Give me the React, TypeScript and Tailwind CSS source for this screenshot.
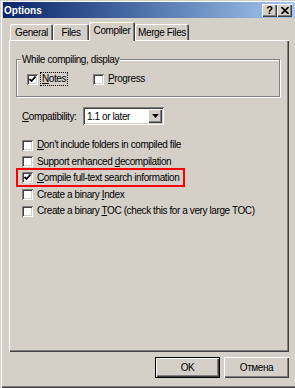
const raised =
  "shadow-[inset_1px_1px_#ffffff,inset_-1px_-1px_#404040,inset_-2px_-2px_#808080]";
const sunken =
  "shadow-[inset_1px_1px_#808080,inset_-1px_-1px_#ffffff,inset_2px_2px_#404040,inset_-2px_-2px_#d4d0c8]";

function CheckBox({ checked }: { checked?: boolean }) {
  return (
    <span
      className={`flex h-[11px] w-[11px] shrink-0 items-center justify-center bg-white ${sunken}`}
    >
      {checked && (
        <svg width="11" height="11" viewBox="0 0 11 11">
          <path d="M2.5 5l2 2 4-4.5" fill="none" stroke="#000" strokeWidth="1.8" />
        </svg>
      )}
    </span>
  );
}

function Label({
  text,
  u,
  focus,
}: {
  text: string;
  u: number;
  focus?: boolean;
}) {
  return (
    <span
      className={`ml-[2px] whitespace-nowrap border px-[1px] leading-[12px] ${
        focus ? "border-dotted border-black" : "border-transparent"
      }`}
    >
      {text.slice(0, u)}
      <span className="underline">{text[u]}</span>
      {text.slice(u + 1)}
    </span>
  );
}

function Tab({ label, selected, w }: { label: string; selected?: boolean; w: string }) {
  return (
    <div
      className={`flex items-center justify-center whitespace-nowrap rounded-t-[2px] bg-[#d4d0c8] shadow-[inset_1px_1px_#ffffff,inset_-1px_0_#404040,inset_-2px_0_#808080] ${w} ${
        selected ? "h-[19px] pb-[2px]" : "mb-px h-[16px]"
      }`}
    >
      {label}
    </div>
  );
}

const options = [
  { text: "Don't include folders in compiled file", u: 0 },
  { text: "Support enhanced decompilation", u: 17 },
  { text: "Compile full-text search information", u: 0, checked: true, mark: true },
  { text: "Create a binary Index", u: 16 },
  { text: "Create a binary TOC (check this for a very large TOC)", u: 16 },
];

export default function App() {
  return (
    <div className="flex h-[388px] w-[295px] flex-col overflow-hidden bg-[#d4d0c8] pl-[3px] pt-[2px] text-[10px] tracking-[-0.4px] text-black shadow-[inset_1px_1px_#d4d0c8,inset_2px_2px_#ffffff,inset_0_-1px_#404040,inset_0_-2px_#808080] [font-family:'Liberation_Sans',Arial,sans-serif]">
      {/* title bar */}
      <div className="flex h-[16px] items-center justify-between bg-linear-to-r from-[#0a246a] to-[#a6caf0] pl-[1px] pr-[3px]">
        <span className="text-[10px] font-bold tracking-normal text-white">Options</span>
        <div className="flex">
          <span
            className={`flex h-[13px] w-[15px] items-center justify-center bg-[#d4d0c8] text-[11px] font-bold leading-none ${raised}`}
          >
            ?
          </span>
          <span
            className={`flex h-[13px] w-[15px] items-center justify-center bg-[#d4d0c8] ${raised}`}
          >
            <svg width="8" height="7" viewBox="0 0 8 7">
              <path d="M0.5 0l7 7M7.5 0l-7 7" stroke="#000" strokeWidth="1.6" />
            </svg>
          </span>
        </div>
      </div>

      <div className="flex flex-col pl-[6px] pt-[4px]">
        {/* tabs */}
        <div className="relative z-10 -mb-px ml-[1px] flex items-end">
          <Tab label="General" w="w-[43px]" />
          <Tab label="Files" w="w-[36px]" />
          <Tab label="Compiler" w="w-[46px]" selected />
          <Tab label="Merge Files" w="w-[54px]" />
        </div>

        {/* panel */}
        <div className={`flex h-[312px] w-[280px] flex-col px-[7px] pt-[13px] ${raised}`}>
          <fieldset className="w-[264px] border border-[#808080] shadow-[1px_1px_0_#ffffff,inset_1px_1px_0_#ffffff]">
            <legend className="ml-[4px] bg-[#d4d0c8] px-[1px] leading-[13px]">
              While compiling, display
            </legend>
            <div className="mb-[9px] mt-[5px] flex h-[16px] items-center pl-[10px]">
              <div className="flex w-[66px] items-center">
                <CheckBox checked />
                <Label text="Notes" u={0} focus />
              </div>
              <div className="flex items-center">
                <CheckBox />
                <Label text="Progress" u={0} />
              </div>
            </div>
          </fieldset>

          <div className="ml-[6px] mt-[10px] flex h-[18px] items-center">
            <span className="w-[61px]">
              <span className="underline">C</span>ompatibility:
            </span>
            <div className={`flex h-[18px] w-[81px] items-center bg-white pr-[2px] ${sunken}`}>
              <span className="flex-1 pl-[4px]">1.1 or later</span>
              <span
                className={`flex h-[14px] w-[14px] items-center justify-center bg-[#d4d0c8] ${raised}`}
              >
                <svg width="7" height="4" viewBox="0 0 7 4">
                  <path d="M0 0h7L3.5 4z" fill="#000" />
                </svg>
              </span>
            </div>
          </div>

          <div className="mt-[12px] flex flex-col">
            {options.map((o) => (
              <div
                key={o.text}
                className={`flex items-center border-2 pl-[4px] ${
                  o.mark
                    ? "-mb-[0.5px] -mt-[2px] h-[19px] w-[169px] border-[#ff0000]"
                    : "h-[16.5px] border-transparent"
                }`}
              >
                <CheckBox checked={o.checked} />
                <Label text={o.text} u={o.u} />
              </div>
            ))}
          </div>
        </div>

        {/* buttons */}
        <div className="mt-[5px] flex w-[280px] justify-end gap-[4px]">
          <button className="h-[21px] w-[65px] border border-black bg-[#d4d0c8] shadow-[inset_1px_1px_#ffffff,inset_-1px_-1px_#404040,inset_-2px_-2px_#808080]">
            OK
          </button>
          <button className={`h-[21px] w-[65px] bg-[#d4d0c8] ${raised}`}>Отмена</button>
        </div>
      </div>
    </div>
  );
}
